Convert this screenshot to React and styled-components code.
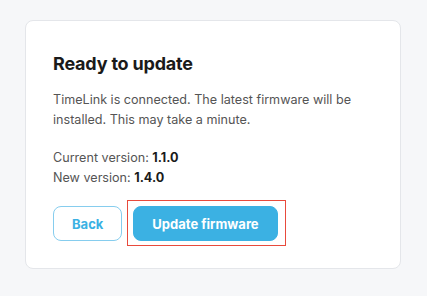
import React from 'react';
import styled, { createGlobalStyle } from 'styled-components';

const GlobalStyle = createGlobalStyle`
  body {
    margin: 0;
    background: #f6f7f9;
    font-family: Inter, "Noto Sans", sans-serif;
  }
`

const Page = styled.div`
  padding: 20px 26px 26px 25px;
`
const Card = styled.div`
  background: #fff;
  border: 1px solid #e4e6ea;
  border-radius: 8px;
  padding: 31px 27px 27px;
`
const Title = styled.h2`
  margin: 0 0 14px;
  font-size: 18px;
  line-height: 24px;
  font-weight: 700;
  color: #1a1a1a;
  letter-spacing: -0.2px;
`
const Text = styled.p`
  margin: 0 0 ${p => p.gap || 0}px;
  font-size: 12.6px;
  line-height: 20px;
  color: #555;
`
const Value = styled.b`
  font-weight: 700;
  color: #1a1a1a;
`
const Actions = styled.div`
  display: flex;
  gap: 11px;
  margin-top: 18px;
`
const Button = styled.button`
  position: relative;
  height: 35px;
  padding: 0 18px;
  border-radius: 8px;
  font-family: inherit;
  font-size: 13px;
  font-weight: 700;
  cursor: pointer;
  border: 1px solid ${p => p.primary ? '#3bb1e3' : '#86cdee'};
  background: ${p => p.primary ? '#3bb1e3' : '#fff'};
  color: ${p => p.primary ? '#fff' : '#3bb1e3'};

  &::after {
    content: '';
    display: ${p => p.focused ? 'block' : 'none'};
    position: absolute;
    top: -7px;
    bottom: -6px;
    left: -7px;
    right: -9px;
    border: 1.5px solid #e84a3c;
  }
`

export default function App() {
  return (
    <>
      <GlobalStyle />
      <Page>
        <Card>
          <Title>Ready to update</Title>
          <Text gap={18}>
            TimeLink is connected. The latest firmware will be installed. This may take a minute.
          </Text>
          <Text>Current version: <Value>1.1.0</Value></Text>
          <Text>New version: <Value>1.4.0</Value></Text>
          <Actions>
            <Button>Back</Button>
            <Button primary focused>Update firmware</Button>
          </Actions>
        </Card>
      </Page>
    </>
  );
}
